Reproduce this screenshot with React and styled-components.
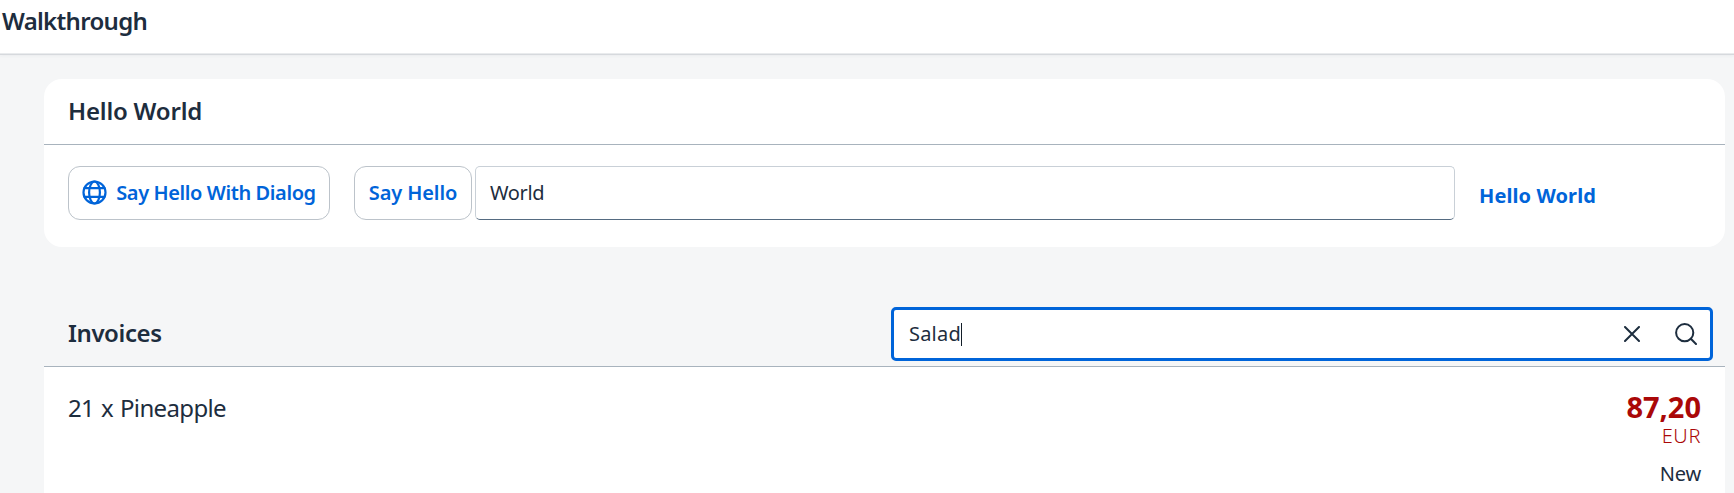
import React from "react";
import styled, { createGlobalStyle } from "styled-components";

const Global = createGlobalStyle`
  *, *::before, *::after { box-sizing: border-box; }
  html, body { margin: 0; height: 100%; }
  body {
    background: #f5f6f7;
    color: #1d2d3e;
    font-family: "Noto Sans", "Open Sans", sans-serif;
    font-size: 20px;
    overflow: hidden;
  }
`;

const Text = styled.span`
  font-size: ${(p) => p.$size || 20}px;
  font-weight: ${(p) => p.$weight || 400};
  letter-spacing: ${(p) => p.$track || 0}px;
  word-spacing: ${(p) => p.$words || 0}px;
  white-space: nowrap;
`;

const Page = styled.div`
  height: 493px;
  overflow: hidden;
`;

const ShellBar = styled.header`
  height: 55px;
  padding-left: 2px;
  line-height: 41px;
  background: #fff;
  border-bottom: 1px solid #d6d9dd;
  box-shadow: inset 0 -1px 0 #e9ebed, 0 1px 3px rgba(34, 53, 72, 0.05);
`;

const Content = styled.main`
  padding: 24px 9px 0 44px;
`;

const Card = styled.section`
  height: 168px;
  background: #fff;
  border-radius: 18px;
`;

const CardTitle = styled.h2`
  height: 66px;
  margin: 0;
  padding-left: 24px;
  font-size: 24px;
  line-height: 63px;
  border-bottom: 1px solid #a8b3bd;
`;

const FormRow = styled.div`
  display: flex;
  padding: 21px 24px 0;
`;

const Button = styled.button`
  display: flex;
  align-items: center;
  justify-content: center;
  gap: 9px;
  flex: none;
  width: ${(p) => p.$width}px;
  height: 54px;
  margin-right: ${(p) => p.$gap}px;
  padding: 0 0 2px;
  color: #0064d9;
  background: #fff;
  border: 1px solid #bcc3ca;
  border-radius: 12px;
  font: inherit;
`;

const NameInput = styled.div`
  width: 980px;
  height: 54px;
  padding-left: 14px;
  line-height: 51px;
  border: 1px solid #c9d0d7;
  border-bottom-color: #556b81;
  border-radius: 5px;
`;

const Greeting = styled.div`
  margin-left: 24px;
  line-height: 60px;
  color: #0064d9;
`;

const ListHeader = styled.div`
  display: flex;
  justify-content: space-between;
  height: 65px;
  margin-top: 55px;
  padding: 0 12px 0 24px;
  border-bottom: 1px solid #a8b3bd;
`;

const ListTitle = styled.h2`
  margin: 0;
  font-size: 24px;
  line-height: 62px;
`;

const SearchField = styled.div`
  display: flex;
  align-items: center;
  width: 822px;
  height: 54px;
  margin-top: 5px;
  padding: 0 13px 0 15px;
  line-height: 48px;
  background: #fff;
  border: 3px solid #0064d9;
  border-radius: 5px;
`;

const Caret = styled.span`
  width: 1px;
  height: 23px;
  margin-right: auto;
  background: #131e29;
`;

const Glyph = styled.svg`
  flex: none;
  width: ${(p) => p.$size}px;
  height: ${(p) => p.$size}px;
  margin-right: ${(p) => p.$gap || 0}px;
  fill: none;
  stroke: currentColor;
  stroke-width: ${(p) => p.$stroke || 2};
  stroke-linecap: round;
`;

const Item = styled.div`
  display: flex;
  justify-content: space-between;
  height: 140px;
  padding: 24px 24px 0;
  background: #fff;
`;

const ItemTitle = styled.div`
  line-height: 34px;
`;

const Amount = styled.div`
  display: flex;
  flex-direction: column;
  align-items: flex-end;
  color: #aa0808;
`;

const AmountLine = styled.div`
  height: ${(p) => p.$height}px;
  line-height: ${(p) => p.$height}px;
  color: ${(p) => p.$color || "inherit"};
`;

function Globe() {
  return (
    <Glyph $size={25} $stroke={2.2} viewBox="0 0 25 25">
      <circle cx="12.5" cy="12.5" r="11" />
      <ellipse cx="12.5" cy="12.5" rx="5.4" ry="11" />
      <path d="M2.4 8.2h20.2M2.4 16.8h20.2" />
    </Glyph>
  );
}

export default function App() {
  return (
    <Page>
      <Global />
      <ShellBar>
        <Text $size={24} $weight={600} $track={-0.7}>Walkthrough</Text>
      </ShellBar>
      <Content>
        <Card>
          <CardTitle>
            <Text $size={24} $weight={600} $track={-0.2}>Hello World</Text>
          </CardTitle>
          <FormRow>
            <Button $width={262} $gap={24}>
              <Globe />
              <Text $weight={600} $track={-0.4}>Say Hello With Dialog</Text>
            </Button>
            <Button $width={118} $gap={3}>
              <Text $weight={600} $track={-0.1}>Say Hello</Text>
            </Button>
            <NameInput>
              <Text $track={-0.35}>World</Text>
            </NameInput>
            <Greeting>
              <Text $weight={700} $track={0.1}>Hello World</Text>
            </Greeting>
          </FormRow>
        </Card>
        <ListHeader>
          <ListTitle>
            <Text $size={24} $weight={600} $track={-0.4}>Invoices</Text>
          </ListTitle>
          <SearchField>
            <Text $track={0.2}>Salad</Text>
            <Caret />
            <Glyph $size={16} $gap={35} viewBox="0 0 16 16">
              <path d="M1 1l14 14M15 1L1 15" />
            </Glyph>
            <Glyph $size={22} viewBox="0 0 22 22">
              <circle cx="9.7" cy="9.7" r="8.6" />
              <path d="M15.8 15.8L21 21" />
            </Glyph>
          </SearchField>
        </ListHeader>
        <Item>
          <ItemTitle>
            <Text $size={24} $track={-0.65} $words={1.3}>21 x Pineapple</Text>
          </ItemTitle>
          <Amount>
            <AmountLine $height={32}>
              <Text $size={29} $weight={700}>87,20</Text>
            </AmountLine>
            <AmountLine $height={26}>
              <Text $weight={300} $track={0.6}>EUR</Text>
            </AmountLine>
            <AmountLine $height={50} $color="#1d2d3e">
              <Text $track={-0.2}>New</Text>
            </AmountLine>
          </Amount>
        </Item>
      </Content>
    </Page>
  );
}
